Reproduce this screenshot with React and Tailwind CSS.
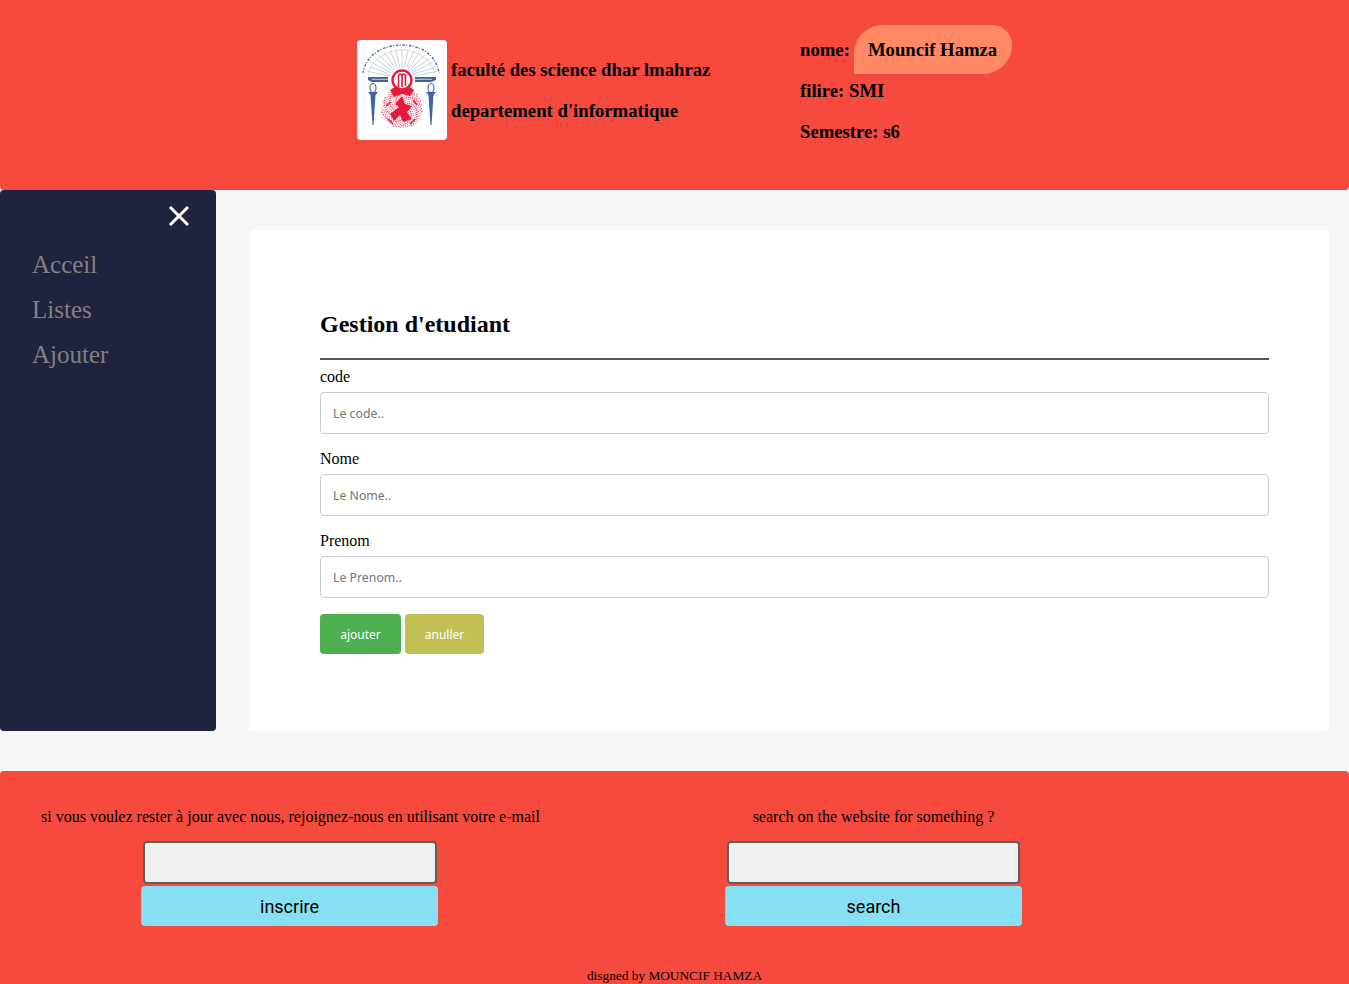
const serif = 'font-["Liberation_Serif",serif]';

function Logo() {
  const rays = [];
  for (let a = -80; a <= 80; a += 10) {
    const r = (a * Math.PI) / 180;
    rays.push(
      <line
        key={a}
        x1={45 + Math.sin(r) * 12}
        y1={38 - Math.cos(r) * 10}
        x2={45 + Math.sin(r) * 35}
        y2={36 - Math.cos(r) * 27}
        stroke="#b4bdd6"
        strokeWidth="0.7"
      />
    );
  }
  // speckled ring of the seal
  const dots = [];
  for (let i = 0; i < 320; i++) {
    const a = i * 2.399963;
    const d = Math.sqrt((i + 0.5) / 320);
    dots.push(
      <circle
        key={i}
        cx={45 + Math.cos(a) * d * 20.5}
        cy={68 + Math.sin(a) * d * 20}
        r={i % 3 === 0 ? 0.8 : 0.55}
        fill="#ea4a66"
      />
    );
  }
  return (
    <div className="w-[90px] h-[100px] bg-white rounded-[4px] shrink-0">
      <svg width="90" height="100" viewBox="0 0 90 100">
        {rays}
        <path d="M6 33 C9 14 27 5 45 5 C63 5 79 14 82 33" fill="none" stroke="#4f6aa8" strokeWidth="1.4" strokeDasharray="2.6 1.2 1 1.8" />
        <path d="M11 35 C14 19 30 10 45 10 C60 10 75 19 78 35" fill="none" stroke="#c3cadd" strokeWidth="0.6" />
        {/* books */}
        <path d="M11 37 H31 V42 H15 L11 40 Z" fill="#3f62a6" />
        <path d="M58 37 H79 V40 L74 42 H58 Z" fill="#3f62a6" />
        <path d="M15 39.3 H31 M58 39.3 H75" stroke="#fff" strokeWidth="0.7" />
        {/* pens */}
        <ellipse cx="16" cy="48" rx="3" ry="4.5" fill="none" stroke="#3f62a6" strokeWidth="1.1" />
        <path d="M11 52 H21 L18.5 55 L16.5 85 L15.5 85 L13.5 55 Z" fill="#3f62a6" />
        <ellipse cx="74" cy="48" rx="3" ry="4.5" fill="none" stroke="#3f62a6" strokeWidth="1.1" />
        <path d="M69 52 H79 L76.5 55 L74.5 85 L73.5 85 L71.5 55 Z" fill="#3f62a6" />
        {/* red seal */}
        {dots}
        <circle cx="45" cy="40" r="9.5" fill="#fff" stroke="#e31c3d" strokeWidth="2.4" />
        <path d="M41.5 47 V37 C41.5 33 45 33 45 37 V47 M45 37 C45 33 48.5 33 48.5 37 V46" fill="none" stroke="#e31c3d" strokeWidth="1.6" />
        <path d="M33 50 L38 47 C41 50 50 50 53 47 L57 50 L53 56 L45 54 L37 57 Z" fill="#e31c3d" />
        <path d="M45 56 L38 64 L42 67 L33 74 L37 81 L43 75 L46 82 L55 79 L50 72 L55 66 L48 64 Z" fill="#e31c3d" />
        <path d="M29 66 L34 62 M60 65 L56 60 M31 79 L36 84 M58 79 L53 84" stroke="#e31c3d" strokeWidth="1.6" />
      </svg>
    </div>
  );
}

function Field({ label, placeholder }) {
  return (
    <div className="mb-[16px]">
      <label className="block text-[16px] leading-[18px] mb-[6px] text-black">{label}</label>
      <input
        className='block w-full h-[42px] px-3 border border-[#ccc] rounded-[4px] bg-white font-["Noto_Sans",sans-serif] text-[12.3px] placeholder:text-[#757575] outline-none'
        placeholder={placeholder}
      />
    </div>
  );
}

function FooterForm({ text, button, className, textClass, inputClass }) {
  return (
    <div className={"flex flex-col items-center " + className}>
      <p className={"text-[16px] leading-[18px] mb-[15px] text-black whitespace-nowrap " + textClass}>{text}</p>
      <input className={"block h-[43px] bg-[#f0f0f0] border-2 border-[#5f5f5f] rounded-[4px] outline-none " + inputClass} />
      <button className='mt-[2px] w-[297px] h-[40px] bg-[#87e0f3] rounded-[4px] text-black text-[18px] font-["Roboto",sans-serif]'>
        {button}
      </button>
    </div>
  );
}

export default function App() {
  return (
    <div className={serif + " h-[984px] overflow-hidden bg-[#f6f6f6]"}>
      <header className="h-[190px] bg-[#f54a3d] rounded-b-[4px] flex items-start pl-[357px] pt-[40px] font-bold text-black text-[18.72px]">
        <Logo />
        <div className="ml-[4px] w-[349px]">
          <p className="leading-[20px] mt-[20px]">faculté des science dhar lmahraz</p>
          <p className="leading-[20px] mt-[21px]">departement d'informatique</p>
        </div>
        <div className="-mt-[15px]">
          <div className="flex items-center">
            <span className="pt-[2px]">nome:</span>
            <span className="ml-[4px] w-[158px] h-[49px] pl-[14px] pt-[2px] flex items-center bg-[#ff8a65] rounded-tl-[32px] rounded-tr-[22px] rounded-br-[32px]">
              Mouncif Hamza
            </span>
          </div>
          <p className="leading-[20px] mt-[7px]">filire: SMI</p>
          <p className="leading-[20px] mt-[21px]">Semestre: s6</p>
        </div>
      </header>

      <div className="flex h-[541px]">
        <aside className="w-[216px] bg-[#1f233e] rounded-[4px] relative pt-[60px] pl-[32px]">
          <button className="absolute top-[15px] left-[168px] text-white">
            <svg width="22" height="22" viewBox="0 0 22 22" fill="none" stroke="currentColor" strokeWidth="3">
              <path d="M2 2 L20 20 M20 2 L2 20" />
            </svg>
          </button>
          <nav className="flex flex-col gap-[15px] text-[25px] leading-[30px] text-[#818181]">
            <a>Acceil</a>
            <a>Listes</a>
            <a>Ajouter</a>
          </nav>
        </aside>
        <main className="mt-[40px] ml-[34px] w-[1079px] bg-white rounded-[4px] pt-[80px] pl-[70px] pr-[60px]">
          <h2 className="text-[24px] leading-[28px] font-bold text-black">Gestion d'etudiant</h2>
          <hr className="mt-[20px] mb-[8px] border-t-0 border-b-2 border-[#555]" />
          <Field label="code" placeholder="Le code.." />
          <Field label="Nome" placeholder="Le Nome.." />
          <Field label="Prenom" placeholder="Le Prenom.." />
          <div className='flex gap-[4px] font-["Noto_Sans",sans-serif] text-[12px] text-white'>
            <button className="w-[81px] h-[40px] pt-[2px] bg-[#4caf50] rounded-[4px]">ajouter</button>
            <button className="w-[79px] h-[40px] pt-[2px] bg-[#c0c055] rounded-[4px]">anuller</button>
          </div>
        </main>
      </div>

      <footer className="mt-[40px] h-[213px] bg-[#f54a3d] rounded-t-[4px] pt-[37px]">
        <div className="flex">
          <FooterForm
            text="si vous voulez rester à jour avec nous, rejoignez-nous en utilisant votre e-mail"
            button="inscrire"
            className="w-[579px]"
            textClass="ml-[2px]"
            inputClass="w-[294px] ml-[1px]"
          />
          <FooterForm
            text="search on the website for something ?"
            button="search"
            className="ml-[5px] w-[579px]"
            textClass=""
            inputClass="w-[293px]"
          />
        </div>
        <p className="mt-[42px] text-center text-[13.33px] leading-[15px] text-black">disgned by MOUNCIF HAMZA</p>
      </footer>
    </div>
  );
}
